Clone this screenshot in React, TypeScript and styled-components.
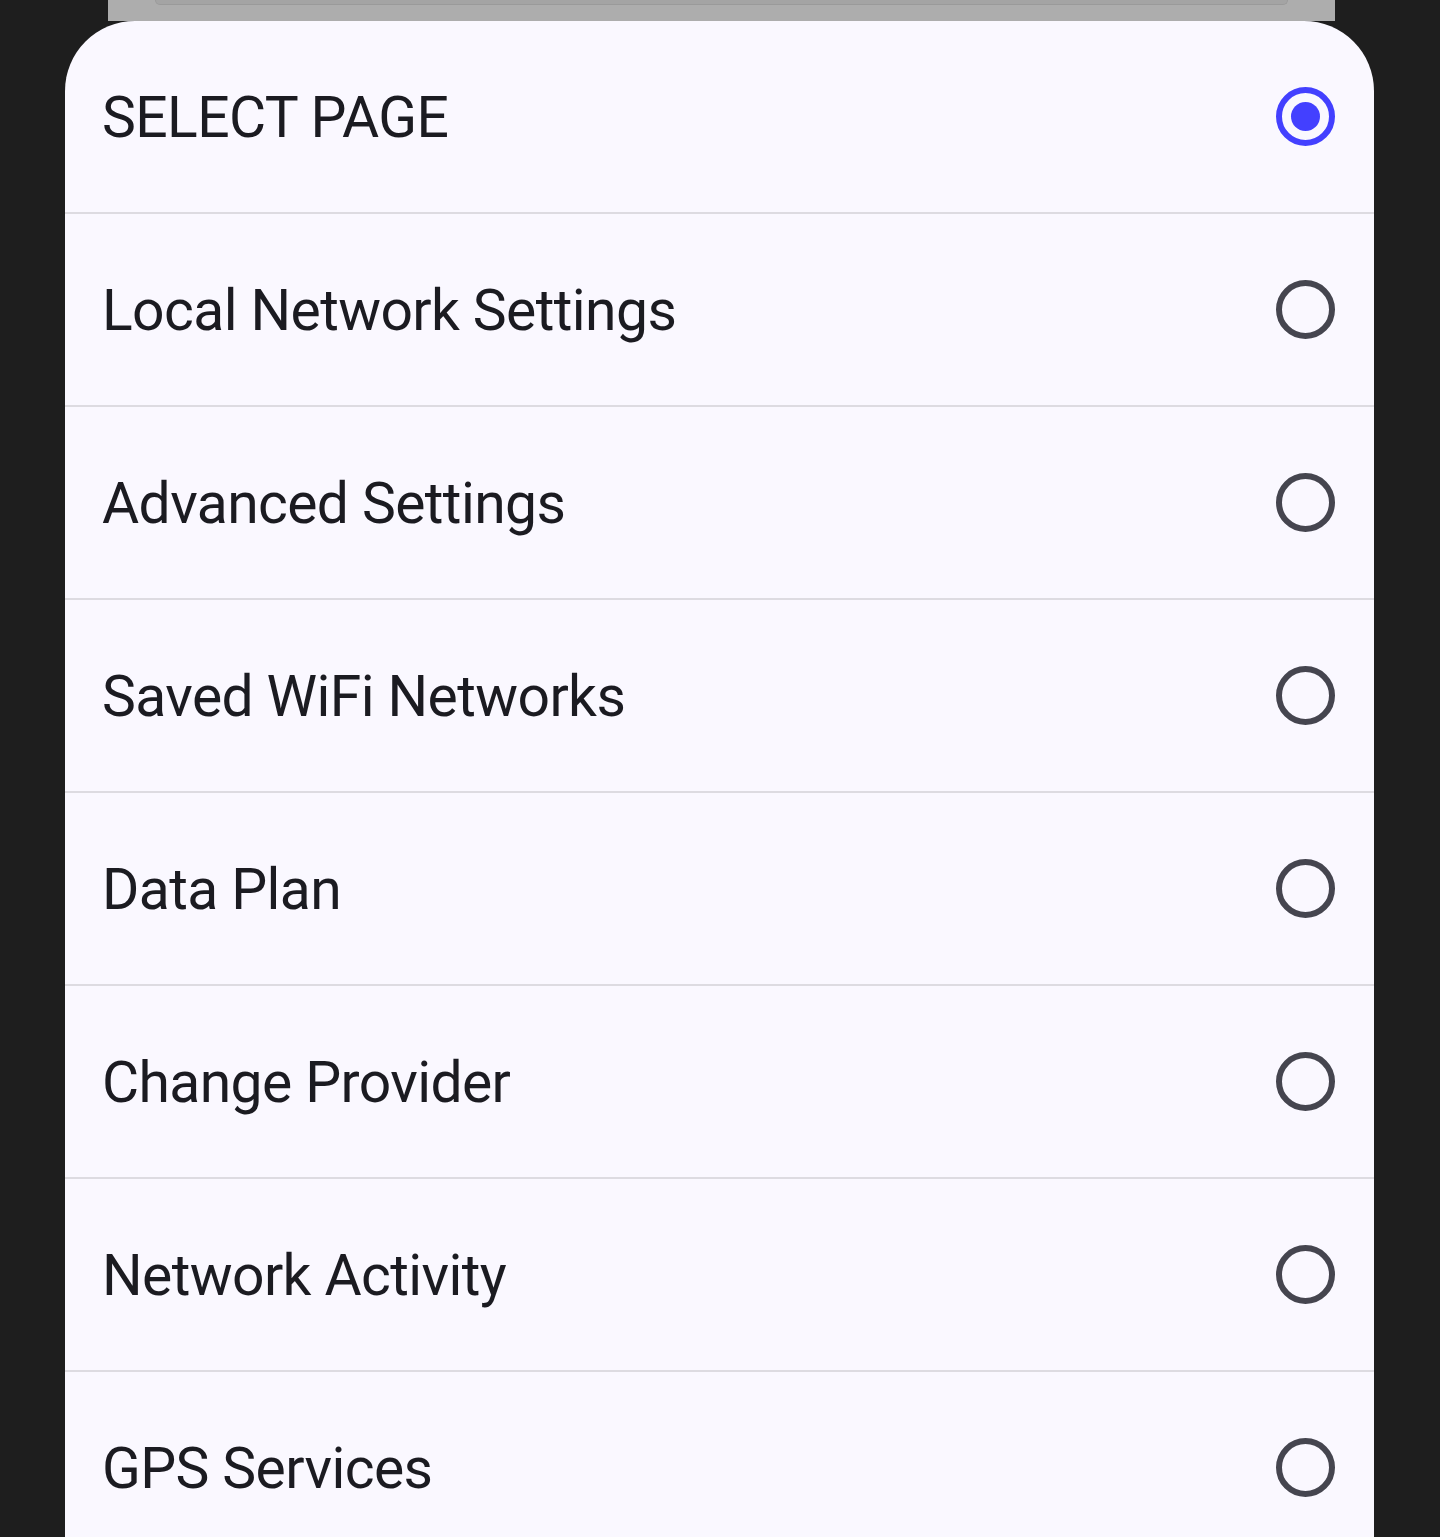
import React, { useState } from 'react';
import styled, { createGlobalStyle } from 'styled-components';

const pages = [
  'SELECT PAGE',
  'Local Network Settings',
  'Advanced Settings',
  'Saved WiFi Networks',
  'Data Plan',
  'Change Provider',
  'Network Activity',
  'GPS Services',
];

const GlobalStyle = createGlobalStyle`
  html, body {
    margin: 0;
    padding: 0;
    background: #1e1e1e;
    overflow: hidden;
  }
  body {
    font-family: Roboto, 'Noto Sans', sans-serif;
  }
`;

const Screen = styled.div`
  width: 1440px;
  height: 1537px;
  display: flex;
  flex-direction: column;
  overflow: hidden;
  background: #1e1e1e;
`;

const Backdrop = styled.div`
  height: 21px;
  margin: 0 105px 0 108px;
  background: #adadad;
  display: flex;
  flex-shrink: 0;
`;

const BackdropField = styled.div`
  flex: 1;
  height: 4px;
  margin: 0 47px;
  background: #a4a4a4;
  border: 1px solid #9a9a9a;
  border-top: none;
  border-radius: 0 0 8px 8px;
`;

const Sheet = styled.div`
  margin: 0 66px 0 65px;
  background: #faf8ff;
  border-radius: 70px 70px 0 0;
  display: flex;
  flex-direction: column;
  flex: 1;
  overflow: hidden;
`;

const Row = styled.div`
  height: 191px;
  flex-shrink: 0;
  display: flex;
  align-items: center;
  justify-content: space-between;
  padding: 0 39px 0 37px;
  border-bottom: 2px solid #dddbe1;
  cursor: pointer;
`;

const Label = styled.span`
  font-family: Roboto, 'Noto Sans', sans-serif;
  font-size: 57px;
  font-weight: 400;
  color: #1b1b21;
  letter-spacing: -0.6px;
  margin-top: 2px;
`;

const Radio = styled.span<{ $checked: boolean }>`
  width: 59px;
  height: 59px;
  box-sizing: border-box;
  border-radius: 50%;
  border: 6px solid ${(p) => (p.$checked ? '#4340ff' : '#45454f')};
  display: flex;
  align-items: center;
  justify-content: center;
  &::after {
    content: '';
    width: 29px;
    height: 29px;
    border-radius: 50%;
    background: #4340ff;
    display: ${(p) => (p.$checked ? 'block' : 'none')};
  }
`;

export default function App() {
  const [selected, setSelected] = useState(0);

  return (
    <Screen>
      <GlobalStyle />
      <Backdrop>
        <BackdropField />
      </Backdrop>
      <Sheet>
        {pages.map((page, i) => (
          <Row key={page} onClick={() => setSelected(i)}>
            <Label>{page}</Label>
            <Radio $checked={selected === i} />
          </Row>
        ))}
      </Sheet>
    </Screen>
  );
}
